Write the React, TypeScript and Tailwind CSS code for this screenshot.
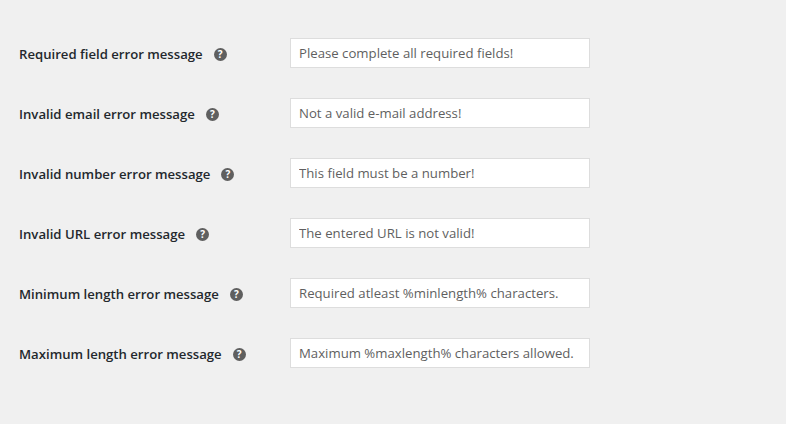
const rows = [
  { label: "Required field error message", value: "Please complete all required fields!" },
  { label: "Invalid email error message", value: "Not a valid e-mail address!" },
  { label: "Invalid number error message", value: "This field must be a number!" },
  { label: "Invalid URL error message", value: "The entered URL is not valid!" },
  { label: "Minimum length error message", value: "Required atleast %minlength% characters." },
  { label: "Maximum length error message", value: "Maximum %maxlength% characters allowed." },
];

function HelpIcon() {
  return (
    <span className="ml-[11px] flex h-[13px] w-[13px] shrink-0 items-center justify-center rounded-full bg-[#5f5f5f] text-[10px] leading-none font-bold text-white">
      ?
    </span>
  );
}

export default function App() {
  return (
    <div className="h-[424px] w-[786px] overflow-hidden bg-[#f0f0f0] pt-[38px] pl-[19px] font-['Open_Sans','Noto_Sans',sans-serif]">
      <div className="flex flex-col gap-[30px]">
        {rows.map((row) => (
          <div key={row.label} className="flex items-center">
            <div className="flex w-[271px] items-center pt-[3px] text-[13.15px] font-semibold text-[#23282d]">
              <span>{row.label}</span>
              <HelpIcon />
            </div>
            <input
              readOnly
              value={row.value}
              className="h-[30px] w-[300px] border border-[#dddddd] bg-white px-2 text-[13.2px] text-[#5f5f5f] outline-none"
            />
          </div>
        ))}
      </div>
    </div>
  );
}
